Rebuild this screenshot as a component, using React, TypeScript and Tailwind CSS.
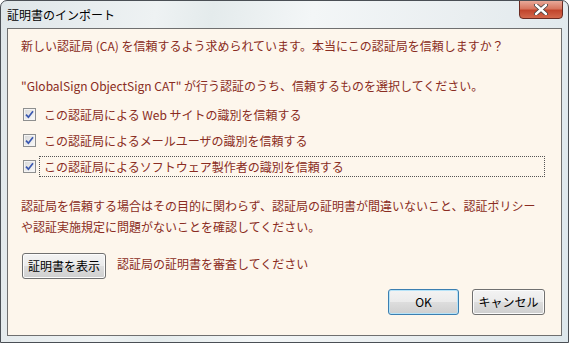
import React from 'react';

const font = { fontFamily: '"Noto Sans CJK JP", "Noto Sans", sans-serif' };

const CheckBox: React.FC = () => (
  <span className="w-[13px] h-[13px] shrink-0 border border-[#8e8f8f] bg-gradient-to-br from-[#d6d6d6] to-[#fbfbfb] shadow-[inset_0_0_0_1px_#f4f4f4] flex items-center justify-center">
    <svg width="9" height="9" viewBox="0 0 9 9">
      <path d="M1 4.6 L3.4 7.2 L8 1.2" fill="none" stroke="#3a58b0" strokeWidth="1.7" />
    </svg>
  </span>
);

const Row: React.FC<{ label: string; focused?: boolean }> = ({ label, focused }) => (
  <div className="flex items-center h-[21px] pl-[15px]">
    <CheckBox />
    <span
      className={
        'ml-[3px] h-[21px] flex items-center pl-[4px] ' +
        (focused ? 'w-[506px] border border-dotted border-[#555]' : 'border border-transparent')
      }
    >
      {label}
    </span>
  </div>
);

const VistaButton: React.FC<{ children: React.ReactNode; width: string; primary?: boolean }> = ({ children, width, primary }) => (
  <button
    className={
      'h-[26px] rounded-[3px] border text-[12px] text-black flex items-center justify-center bg-[linear-gradient(#f3f3f3_0%,#ebebeb_48%,#dddddd_52%,#cfcfcf_100%)] ' +
      width +
      (primary ? ' border-[#3c7fb1] shadow-[inset_0_0_0_1px_#b6e3f8]' : ' border-[#707070] shadow-[inset_0_0_0_1px_#fcfcfc]')
    }
  >
    {children}
  </button>
);

export default function App() {
  return (
    <div
      className="w-[569px] h-[343px] overflow-hidden border border-[#4a4f55] rounded-t-[7px] bg-[linear-gradient(100deg,#dfe6e9_0%,#eef2f3_25%,#e4ebec_34%,#f3f6f7_50%,#e9eef0_75%,#dde7ec_100%)] flex flex-col"
      style={font}
    >
      <div className="h-[27px] flex items-start justify-between pl-[6px] pr-[5px]">
        <span className="text-[12px] text-black mt-[6px] leading-[16px]">証明書のインポート</span>
        <div className="w-[44px] h-[19px] mt-[-1px] rounded-b-[4px] border border-[#6a2b22] bg-[linear-gradient(#e8a999_0%,#d7765f_45%,#c1452c_55%,#d3684c_100%)] flex items-center justify-center">
          <svg width="16" height="11" viewBox="0 0 16 11">
            <path d="M3 1 L13 10 M13 1 L3 10" stroke="#3d3d3d" strokeWidth="4" strokeLinecap="round" />
            <path d="M3 1 L13 10 M13 1 L3 10" stroke="#ffffff" strokeWidth="2.4" strokeLinecap="round" />
          </svg>
        </div>
      </div>
      <div className="flex-1 mx-[6px] mb-[6px] border border-[#6f6f6f] bg-[#fdf6ec] text-[12px] text-[#8a2c22] flex flex-col pl-[13px] pr-[16px] pt-[7px]">
        <p className="leading-[20px]">新しい認証局 (CA) を信頼するよう求められています。本当にこの認証局を信頼しますか？</p>
        <p className="leading-[20px] mt-[20px]">"GlobalSign ObjectSign CAT" が行う認証のうち、信頼するものを選択してください。</p>
        <div className="mt-[8px] ml-[-13px] flex flex-col gap-[5px]">
          <Row label="この認証局による Web サイトの識別を信頼する" />
          <Row label="この認証局によるメールユーザの識別を信頼する" />
          <Row label="この認証局によるソフトウェア製作者の識別を信頼する" focused />
        </div>
        <p className="leading-[21px] mt-[18px]">
          認証局を信頼する場合はその目的に関わらず、認証局の証明書が間違いないこと、認証ポリシー
          <br />
          や認証実施規定に問題がないことを確認してください。
        </p>
        <div className="flex items-center mt-[16px] ml-[1px]">
          <VistaButton width="w-[84px]">証明書を表示</VistaButton>
          <span className="ml-[11px] mb-[4px]">認証局の証明書を審査してください</span>
        </div>
        <div className="flex justify-end gap-[13px] mt-[10px]">
          <VistaButton width="w-[71px]" primary>OK</VistaButton>
          <VistaButton width="w-[73px]">キャンセル</VistaButton>
        </div>
      </div>
    </div>
  );
}
